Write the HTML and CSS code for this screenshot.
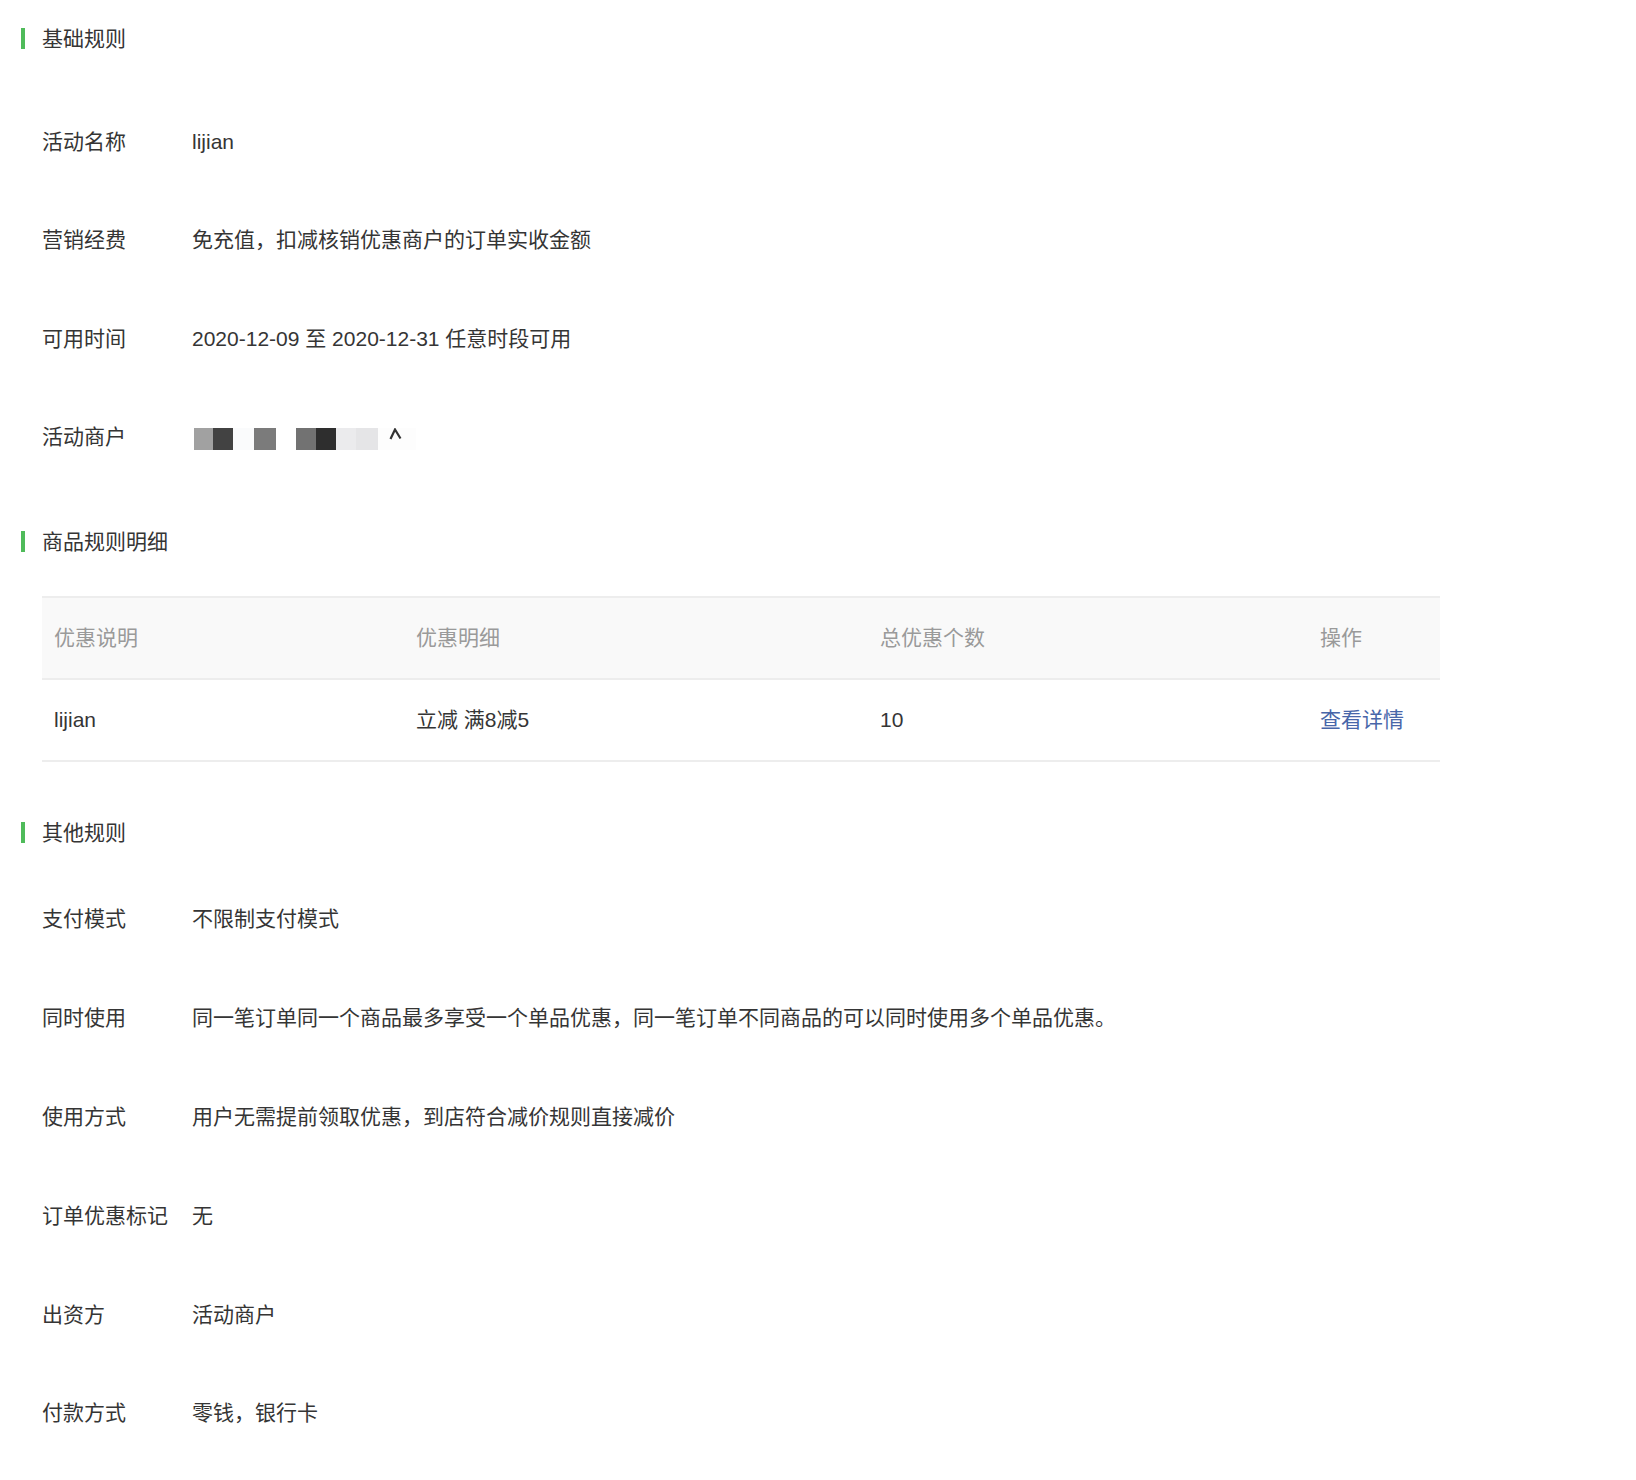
FILE: index.html
```html
<!DOCTYPE html>
<html lang="zh-CN">
<head>
    <meta charset="UTF-8">
    <meta name="viewport" content="width=device-width, initial-scale=1.0">
    <title>活动详情</title>
    <link rel="stylesheet" href="styles.css">
</head>
<body>
    <div class="page">
        <section class="section section-basic">
            <h2 class="section-title">基础规则</h2>
            <div class="info-list">
                <div class="info-row">
                    <span class="info-label">活动名称</span>
                    <span class="info-value">lijian</span>
                </div>
                <div class="info-row">
                    <span class="info-label">营销经费</span>
                    <span class="info-value">免充值，扣减核销优惠商户的订单实收金额</span>
                </div>
                <div class="info-row">
                    <span class="info-label">可用时间</span>
                    <span class="info-value">2020-12-09 至 2020-12-31 任意时段可用</span>
                </div>
                <div class="info-row">
                    <span class="info-label">活动商户</span>
                    <span class="info-value mosaic">
                        <i class="cell c1"></i><i class="cell c2"></i><i class="cell c3"></i><i class="cell c4"></i><i class="cell c5"></i><i class="cell c6"></i><i class="cell c7"></i><i class="cell c8"></i><i class="cell c9"></i><i class="cell c10">
                            <svg width="16" height="12" viewBox="0 0 16 12"><path d="M2.5 11 L7 1.5 L12.5 10.5" fill="none" stroke="#333" stroke-width="2.2"/></svg>
                        </i>
                    </span>
                </div>
            </div>
        </section>

        <section class="section section-goods">
            <h2 class="section-title">商品规则明细</h2>
            <div class="rule-table">
                <div class="table-row table-head">
                    <div class="table-cell">优惠说明</div>
                    <div class="table-cell">优惠明细</div>
                    <div class="table-cell">总优惠个数</div>
                    <div class="table-cell">操作</div>
                </div>
                <div class="table-row">
                    <div class="table-cell">lijian</div>
                    <div class="table-cell">立减 满8减5</div>
                    <div class="table-cell">10</div>
                    <div class="table-cell"><a href="#" class="link">查看详情</a></div>
                </div>
            </div>
        </section>

        <section class="section section-other">
            <h2 class="section-title">其他规则</h2>
            <div class="info-list">
                <div class="info-row">
                    <span class="info-label">支付模式</span>
                    <span class="info-value">不限制支付模式</span>
                </div>
                <div class="info-row">
                    <span class="info-label">同时使用</span>
                    <span class="info-value">同一笔订单同一个商品最多享受一个单品优惠，同一笔订单不同商品的可以同时使用多个单品优惠。</span>
                </div>
                <div class="info-row">
                    <span class="info-label">使用方式</span>
                    <span class="info-value">用户无需提前领取优惠，到店符合减价规则直接减价</span>
                </div>
                <div class="info-row">
                    <span class="info-label">订单优惠标记</span>
                    <span class="info-value">无</span>
                </div>
                <div class="info-row">
                    <span class="info-label">出资方</span>
                    <span class="info-value">活动商户</span>
                </div>
                <div class="info-row">
                    <span class="info-label">付款方式</span>
                    <span class="info-value">零钱，银行卡</span>
                </div>
            </div>
        </section>
    </div>
</body>
</html>
```

FILE: styles.css
```css
* {
    margin: 0;
    padding: 0;
    box-sizing: border-box;
}

body {
    font-family: 'Liberation Sans', 'Noto Sans CJK SC', sans-serif;
    font-size: 21px;
    color: #353535;
    background: #fff;
}

.page {
    padding: 28px 0 0 21px;
    width: 1440px;
}

.section-title {
    font-size: 21px;
    font-weight: normal;
    line-height: 21px;
    height: 21px;
    padding-left: 17px;
    border-left: 4px solid #4fbb5a;
    color: #353535;
}

.section-goods {
    margin-top: 44px;
}

.section-other {
    margin-top: 60px;
}

.info-list {
    margin-left: 21px;
    margin-top: 43.5px;
}

.section-other .info-list {
    margin-top: 26.5px;
}

.info-row {
    display: flex;
    align-items: center;
    height: 98.5px;
    line-height: 24px;
}

.section-other .info-row {
    height: 98.9px;
}

.info-label {
    width: 150px;
    flex-shrink: 0;
}

.info-value {
    flex: 1;
}

/* masked merchant name */
.mosaic {
    display: flex;
    align-items: center;
    height: 22px;
    margin: 3px 0 0 2px;
}

.cell {
    display: block;
    height: 22px;
    width: 20px;
}

.c1 { width: 19px; background: #a1a1a1; }
.c2 { background: #424242; }
.c3 { width: 21px; background: #fafbfc; }
.c4 { width: 22px; background: #7b7b7b; }
.c5 { background: #fff; }
.c6 { background: #727272; }
.c7 { background: #2e2e2e; }
.c8 { background: #ebebed; }
.c9 { width: 22px; background: #e5e5e7; }
.c10 {
    width: 38px;
    background: #fdfdfd;
    padding: 0 0 0 10px;
}

.c10 svg {
    display: block;
}

.rule-table {
    margin-left: 21px;
    margin-top: 44.5px;
    width: 1398px;
    border-top: 2px solid #ededed;
}

.table-row {
    display: grid;
    grid-template-columns: 362px 464px 440px 132px;
    height: 82px;
    border-bottom: 2px solid #ededed;
    align-items: center;
}

.table-head {
    background: #f9f9f9;
    color: #9a9a9a;
}

.table-cell {
    padding-left: 12px;
    line-height: 24px;
}

.link {
    color: #4866a9;
    text-decoration: none;
}
```
